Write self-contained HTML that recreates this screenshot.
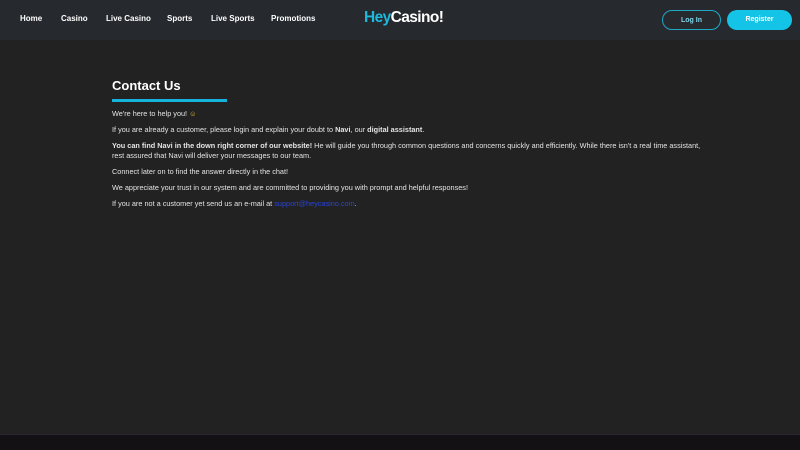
<!DOCTYPE html>
<html><head><meta charset="utf-8"><style>
*{margin:0;padding:0;box-sizing:border-box}
body{width:800px;height:450px;overflow:hidden;background:#222222;font-family:"Liberation Sans",sans-serif;color:#fff;position:relative}
.hdr{position:absolute;left:0;top:0;width:800px;height:40px;background:#26292e}
.nav a{position:absolute;top:14px;font-size:8px;font-weight:bold;color:#fff;text-decoration:none}
.logo{position:absolute;left:364px;top:9px;font-size:15.5px;letter-spacing:-0.6px;font-weight:bold}
.logo span{color:#1fb8dd}
.login{position:absolute;left:662px;top:10px;width:59px;height:20px;border:1px solid #1fa7c8;border-radius:10px;font-size:7px;font-weight:bold;color:#7ed4ea;text-align:center;line-height:19px}
.reg{position:absolute;left:727px;top:10px;width:65px;height:20px;background:#14c4e6;border-radius:10px;font-size:7px;font-weight:bold;color:#fff;text-align:center;line-height:19px}
h1{position:absolute;left:112px;top:78px;font-size:13px;font-weight:bold}
.bar{position:absolute;left:112px;top:99px;width:115px;height:3px;background:#16b4dc}
.c{position:absolute;left:112px;top:109px;width:600px;font-size:7.3px;line-height:9.5px;color:#e4e4e4}
.c p{margin-bottom:6.5px}
.foot{position:absolute;left:0;top:434px;width:800px;height:16px;background:#141115;border-top:1px solid #2a2530}
a.m{color:#2a44d8;text-decoration:none}
</style></head><body>
<div class="hdr">
<div class="nav">
<a style="left:20px">Home</a><a style="left:61px">Casino</a><a style="left:106px">Live Casino</a><a style="left:167px">Sports</a><a style="left:211px">Live Sports</a><a style="left:271px">Promotions</a>
</div>
<div class="logo"><span>Hey</span>Casino!</div>
<div class="login">Log In</div>
<div class="reg">Register</div>
</div>
<h1>Contact Us</h1>
<div class="bar"></div>
<div class="c">
<p>We're here to help you! <span style="color:#e8b830">☺</span></p>
<p>If you are already a customer, please login and explain your doubt to <b>Navi</b>, our <b>digital assistant</b>.</p>
<p><b>You can find Navi in the down right corner of our website!</b> He will guide you through common questions and concerns quickly and efficiently. While there isn't a real time assistant,<br>rest assured that Navi will deliver your messages to our team.</p>
<p>Connect later on to find the answer directly in the chat!</p>
<p>We appreciate your trust in our system and are committed to providing you with prompt and helpful responses!</p>
<p>If you are not a customer yet send us an e-mail at <a class="m">support@heycasino.com</a>.</p>
</div>
<div class="foot"></div>
</body></html>
